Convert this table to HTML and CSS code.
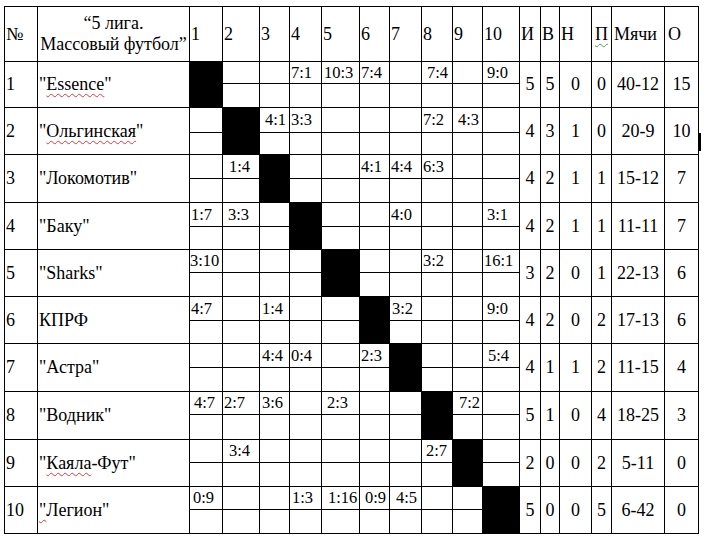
FILE: index.html
```html
<!DOCTYPE html>
<html lang="ru">
<head>
<meta charset="utf-8">
<title>5 лига. Массовый футбол</title>
<link rel="stylesheet" href="styles.css">
</head>
<body>
<div class="page">
<table class="grid">
<colgroup>
<col class="w33"><col class="w152"><col class="w33"><col class="w37"><col class="w30"><col class="w32"><col class="w38"><col class="w30"><col class="w32"><col class="w31"><col class="w30"><col class="w37"><col class="w21"><col class="w19"><col class="w32"><col class="w20"><col class="w53"><col class="w34">
</colgroup>
<thead>
<tr class="head">
<th class="num">№</th>
<th class="title">“5 лига.<br>Массовый футбол”</th>
<th>1</th><th>2</th><th>3</th><th>4</th><th>5</th><th>6</th><th>7</th><th>8</th><th>9</th><th>10</th>
<th>И</th><th>В</th><th>Н</th><th class="hp"><span class="gram">П</span></th><th class="hm">Мячи</th><th class="ho">О</th>
</tr>
</thead>
<tbody>
<!-- 1 -->
<tr class="h22">
<td class="num" rowspan="2">1</td><td class="team" rowspan="2">"<span class="spell">Essence</span>"</td>
<td class="x" rowspan="2"></td><td class="s"></td><td class="s"></td><td class="s">7:1</td><td class="s s2">10:3</td><td class="s">7:4</td><td class="s"></td><td class="s s5">7:4</td><td class="s"></td><td class="s s4">9:0</td>
<td class="st" rowspan="2">5</td><td class="st" rowspan="2">5</td><td class="st" rowspan="2">0</td><td class="st" rowspan="2">0</td><td class="st" rowspan="2">40-12</td><td class="st" rowspan="2">15</td>
</tr>
<tr class="h24"><td></td><td></td><td></td><td></td><td></td><td></td><td></td><td></td><td></td></tr>
<!-- 2 -->
<tr class="h25">
<td class="num" rowspan="2">2</td><td class="team" rowspan="2">"<span class="spell">Ольгинская</span>"</td>
<td class="s"></td><td class="x" rowspan="2"></td><td class="s s5">4:1</td><td class="s">3:3</td><td class="s"></td><td class="s"></td><td class="s"></td><td class="s">7:2</td><td class="s s5">4:3</td><td class="s"></td>
<td class="st" rowspan="2">4</td><td class="st" rowspan="2">3</td><td class="st" rowspan="2">1</td><td class="st" rowspan="2">0</td><td class="st" rowspan="2">20-9</td><td class="st" rowspan="2">10</td>
</tr>
<tr class="h22"><td></td><td></td><td></td><td></td><td></td><td></td><td></td><td></td><td></td></tr>
<!-- 3 -->
<tr class="h24">
<td class="num" rowspan="2">3</td><td class="team" rowspan="2">"Локомотив"</td>
<td class="s"></td><td class="s s6">1:4</td><td class="x" rowspan="2"></td><td class="s"></td><td class="s"></td><td class="s">4:1</td><td class="s">4:4</td><td class="s">6:3</td><td class="s"></td><td class="s"></td>
<td class="st" rowspan="2">4</td><td class="st" rowspan="2">2</td><td class="st" rowspan="2">1</td><td class="st" rowspan="2">1</td><td class="st" rowspan="2">15-12</td><td class="st" rowspan="2">7</td>
</tr>
<tr class="h24"><td></td><td></td><td></td><td></td><td></td><td></td><td></td><td></td><td></td></tr>
<!-- 4 -->
<tr class="h24">
<td class="num" rowspan="2">4</td><td class="team" rowspan="2">"Баку"</td>
<td class="s">1:7</td><td class="s s5">3:3</td><td class="s"></td><td class="x" rowspan="2"></td><td class="s"></td><td class="s"></td><td class="s">4:0</td><td class="s"></td><td class="s"></td><td class="s s4">3:1</td>
<td class="st" rowspan="2">4</td><td class="st" rowspan="2">2</td><td class="st" rowspan="2">1</td><td class="st" rowspan="2">1</td><td class="st" rowspan="2">11-11</td><td class="st" rowspan="2">7</td>
</tr>
<tr class="h23"><td></td><td></td><td></td><td></td><td></td><td></td><td></td><td></td><td></td></tr>
<!-- 5 -->
<tr class="h23">
<td class="num" rowspan="2">5</td><td class="team" rowspan="2">"Sharks"</td>
<td class="s s0">3:10</td><td class="s"></td><td class="s"></td><td class="s"></td><td class="x" rowspan="2"></td><td class="s"></td><td class="s"></td><td class="s">3:2</td><td class="s"></td><td class="s">16:1</td>
<td class="st" rowspan="2">3</td><td class="st" rowspan="2">2</td><td class="st" rowspan="2">0</td><td class="st" rowspan="2">1</td><td class="st" rowspan="2">22-13</td><td class="st" rowspan="2">6</td>
</tr>
<tr class="h24"><td></td><td></td><td></td><td></td><td></td><td></td><td></td><td></td><td></td></tr>
<!-- 6 -->
<tr class="h24">
<td class="num" rowspan="2">6</td><td class="team" rowspan="2">КПРФ</td>
<td class="s">4:7</td><td class="s"></td><td class="s s2">1:4</td><td class="s"></td><td class="s"></td><td class="x" rowspan="2"></td><td class="s s2">3:2</td><td class="s"></td><td class="s"></td><td class="s s4">9:0</td>
<td class="st" rowspan="2">4</td><td class="st" rowspan="2">2</td><td class="st" rowspan="2">0</td><td class="st" rowspan="2">2</td><td class="st" rowspan="2">17-13</td><td class="st" rowspan="2">6</td>
</tr>
<tr class="h23"><td></td><td></td><td></td><td></td><td></td><td></td><td></td><td></td><td></td></tr>
<!-- 7 -->
<tr class="h24">
<td class="num" rowspan="2">7</td><td class="team" rowspan="2">"Астра"</td>
<td class="s"></td><td class="s"></td><td class="s s2">4:4</td><td class="s">0:4</td><td class="s"></td><td class="s">2:3</td><td class="x" rowspan="2"></td><td class="s"></td><td class="s"></td><td class="s s5">5:4</td>
<td class="st" rowspan="2">4</td><td class="st" rowspan="2">1</td><td class="st" rowspan="2">1</td><td class="st" rowspan="2">2</td><td class="st" rowspan="2">11-15</td><td class="st" rowspan="2">4</td>
</tr>
<tr class="h24"><td></td><td></td><td></td><td></td><td></td><td></td><td></td><td></td><td></td></tr>
<!-- 8 -->
<tr class="h23">
<td class="num" rowspan="2">8</td><td class="team" rowspan="2">"Водник"</td>
<td class="s s4">4:7</td><td class="s">2:7</td><td class="s s2">3:6</td><td class="s"></td><td class="s s5">2:3</td><td class="s"></td><td class="s"></td><td class="x" rowspan="2"></td><td class="s s6">7:2</td><td class="s"></td>
<td class="st" rowspan="2">5</td><td class="st" rowspan="2">1</td><td class="st" rowspan="2">0</td><td class="st" rowspan="2">4</td><td class="st" rowspan="2">18-25</td><td class="st" rowspan="2">3</td>
</tr>
<tr class="h25"><td></td><td></td><td></td><td></td><td></td><td></td><td></td><td></td><td></td></tr>
<!-- 9 -->
<tr class="h23">
<td class="num" rowspan="2">9</td><td class="team" rowspan="2">"<span class="spell">Каяла</span>-Фут"</td>
<td class="s"></td><td class="s s6">3:4</td><td class="s"></td><td class="s"></td><td class="s"></td><td class="s"></td><td class="s"></td><td class="s s4">2:7</td><td class="x" rowspan="2"></td><td class="s"></td>
<td class="st" rowspan="2">2</td><td class="st" rowspan="2">0</td><td class="st" rowspan="2">0</td><td class="st" rowspan="2">2</td><td class="st" rowspan="2">5-11</td><td class="st" rowspan="2">0</td>
</tr>
<tr class="h24"><td></td><td></td><td></td><td></td><td></td><td></td><td></td><td></td><td></td></tr>
<!-- 10 -->
<tr class="h23">
<td class="num" rowspan="2">10</td><td class="team" rowspan="2"><span class="spell">"</span>Легион"</td>
<td class="s s3">0:9</td><td class="s"></td><td class="s"></td><td class="s s2">1:3</td><td class="s s6">1:16</td><td class="s s5">0:9</td><td class="s s6">4:5</td><td class="s"></td><td class="s"></td><td class="x" rowspan="2"></td>
<td class="st" rowspan="2">5</td><td class="st" rowspan="2">0</td><td class="st" rowspan="2">0</td><td class="st" rowspan="2">5</td><td class="st" rowspan="2">6-42</td><td class="st" rowspan="2">0</td>
</tr>
<tr class="h24"><td></td><td></td><td></td><td></td><td></td><td></td><td></td><td></td><td></td></tr>
</tbody>
</table>
<span class="cursor"></span>
</div>
</body>
</html>
```
FILE: styles.css
```css
html, body {
  margin: 0;
  padding: 0;
  background: #fff;
}
.page {
  position: relative;
  width: 707px;
  height: 539px;
  padding: 6px 0 0 4px;
  box-sizing: border-box;
  font-family: "Liberation Serif", "Times New Roman", serif;
  color: #000;
}
.grid {
  border-collapse: collapse;
  table-layout: fixed;
  font-size: 18px;
}
.grid th, .grid td {
  border: 1px solid #000;
  padding: 0 1px;
  font-weight: normal;
  text-align: left;
  vertical-align: middle;
  white-space: nowrap;
  line-height: 1.15;
  overflow: visible;
}
.w33 { width: 33px; }
.w152 { width: 152px; }
.w37 { width: 37px; }
.w30 { width: 30px; }
.w32 { width: 32px; }
.w38 { width: 38px; }
.w31 { width: 31px; }
.w21 { width: 21px; }
.w19 { width: 19px; }
.w20 { width: 20px; }
.w53 { width: 53px; }
.w34 { width: 34px; }

.head { height: 55px; }
.h22 { height: 22px; }
.h23 { height: 23px; }
.h24 { height: 24px; }
.h25 { height: 25px; }

.grid .title {
  text-align: center;
  padding: 0;
}
.grid .hp { padding-left: 3px; }
.grid .hm { padding-left: 2px; }
.grid .ho { padding-left: 3px; }

.grid .team { padding-left: 1px; }

.grid .s {
  font-size: 16.5px;
  line-height: 1;
  padding-top: 1px;
}
.grid .s0 { padding-left: 0; }
.grid .s2 { padding-left: 2px; }
.grid .s3 { padding-left: 3px; }
.grid .s4 { padding-left: 4px; }
.grid .s5 { padding-left: 5px; }
.grid .s6 { padding-left: 6px; }

.grid .x { background: #000; }

.grid .st {
  text-align: center;
  padding: 0;
}

.spell {
  text-decoration: underline wavy #e0383e;
  text-decoration-thickness: 1px;
  text-underline-offset: 3px;
  text-decoration-skip-ink: none;
}
.gram {
  text-decoration: underline wavy #4aa04a;
  text-decoration-thickness: 1px;
  text-underline-offset: 3px;
  text-decoration-skip-ink: none;
}
.cursor {
  position: absolute;
  left: 699px;
  top: 133px;
  width: 2px;
  height: 18px;
  background: #000;
}
```
